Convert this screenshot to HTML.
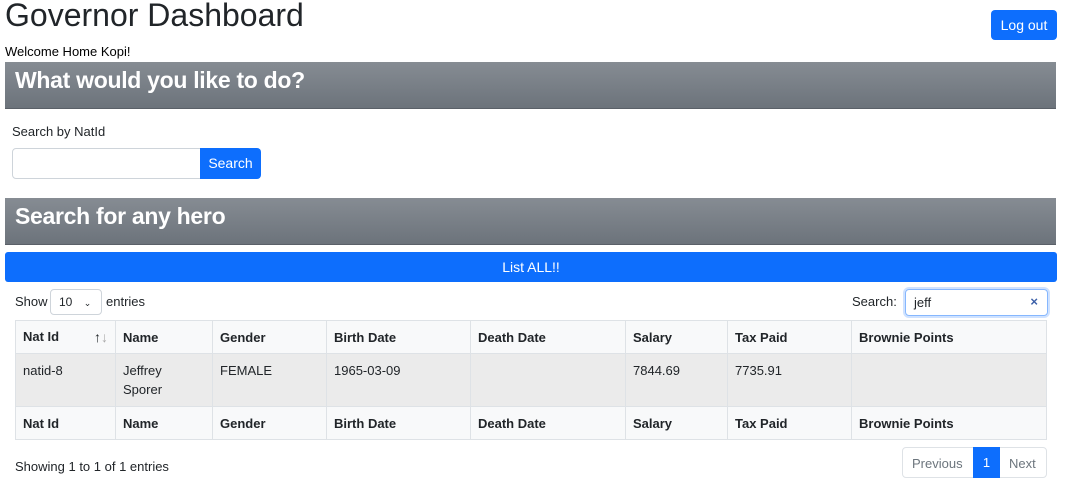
<!DOCTYPE html>
<html><head><style>
*{box-sizing:border-box;margin:0;padding:0}
body{width:1065px;height:490px;background:#fff;font-family:"Liberation Sans",Arial,sans-serif;color:#212529;position:relative;overflow:hidden}
.a{position:absolute}
.bar{position:absolute;left:5px;width:1051px;height:47px;background:linear-gradient(#868c93,#6c737b);color:#fff;font-weight:bold;font-size:23px;padding:5px 0 0 10px;border-bottom:1px solid #5a6068;letter-spacing:-0.3px}
.btn{position:absolute;background:#0d6efd;color:#fff;border-radius:4px;font-size:14px;text-align:center}
table{position:absolute;left:15px;top:320px;width:1032px;border-collapse:collapse;font-size:13px}
td,th{border:1px solid #dee2e6;padding:0 7px;text-align:left;vertical-align:top}
th{background:#f8f9fa;height:33px;vertical-align:middle;font-weight:bold}
tr.d td{background:#ebebeb;height:53px;padding-top:7px;line-height:19px}
</style></head><body>
<div class="a" style="left:5px;top:-3px;font-size:32px;color:#212529">Governor Dashboard</div>
<div class="btn" style="left:991px;top:10px;width:66px;height:30px;line-height:30px">Log out</div>
<div class="a" style="left:5px;top:44px;font-size:13px;color:#000">Welcome Home Kopi!</div>
<div class="bar" style="top:62px">What would you like to do?</div>
<div class="a" style="left:12px;top:124px;font-size:13px">Search by NatId</div>
<div class="a" style="left:12px;top:148px;width:189px;height:31px;border:1px solid #ced4da;border-radius:4px 0 0 4px"></div>
<div class="btn" style="left:200px;top:148px;width:61px;height:31px;line-height:31px;border-radius:0 4px 4px 0">Search</div>
<div class="bar" style="top:198px">Search for any hero</div>
<div class="btn" style="left:5px;top:252px;width:1052px;height:30px;line-height:30px;border-radius:3px">List ALL!!</div>
<div class="a" style="left:15px;top:294px;font-size:13px">Show</div>
<div class="a" style="left:50px;top:289px;width:52px;height:26px;border:1px solid #ced4da;border-radius:4px;font-size:12px;padding:5px 0 0 8px">10 <span style="margin-left:8px;font-size:9px">&#8964;</span></div>
<div class="a" style="left:106px;top:294px;font-size:13px">entries</div>
<div class="a" style="left:852px;top:294px;font-size:13px">Search:</div>
<div class="a" style="left:905px;top:289px;width:143px;height:27px;border:1px solid #86b7fe;box-shadow:0 0 0 2px #cfe2ff;border-radius:4px;font-size:13px;padding:5px 0 0 8px">jeff<span style="position:absolute;right:9px;top:4px;color:#3b5fa8;font-weight:bold">×</span></div>
<table>
<tr><th style="width:100px">Nat Id <span style="float:right;font-size:14px">↑<span style="color:#aaa">↓</span></span></th><th style="width:97px">Name</th><th style="width:114px">Gender</th><th style="width:144px">Birth Date</th><th style="width:155px">Death Date</th><th style="width:102px">Salary</th><th style="width:124px">Tax Paid</th><th>Brownie Points</th></tr>
<tr class="d"><td>natid-8</td><td>Jeffrey<br>Sporer</td><td>FEMALE</td><td>1965-03-09</td><td></td><td>7844.69</td><td>7735.91</td><td></td></tr>
<tr><th>Nat Id</th><th>Name</th><th>Gender</th><th>Birth Date</th><th>Death Date</th><th>Salary</th><th>Tax Paid</th><th>Brownie Points</th></tr>
</table>
<div class="a" style="left:15px;top:459px;font-size:13px">Showing 1 to 1 of 1 entries</div>
<div class="a" style="left:902px;top:447px;width:145px;height:31px;border:1px solid #dee2e6;border-radius:4px;font-size:13px;color:#6c757d">
<span class="a" style="left:9px;top:8px">Previous</span>
<span class="a" style="left:70px;top:-1px;width:27px;height:31px;background:#0d6efd;color:#fff;text-align:center;line-height:31px">1</span>
<span class="a" style="left:106px;top:8px">Next</span></div>
</body></html>
